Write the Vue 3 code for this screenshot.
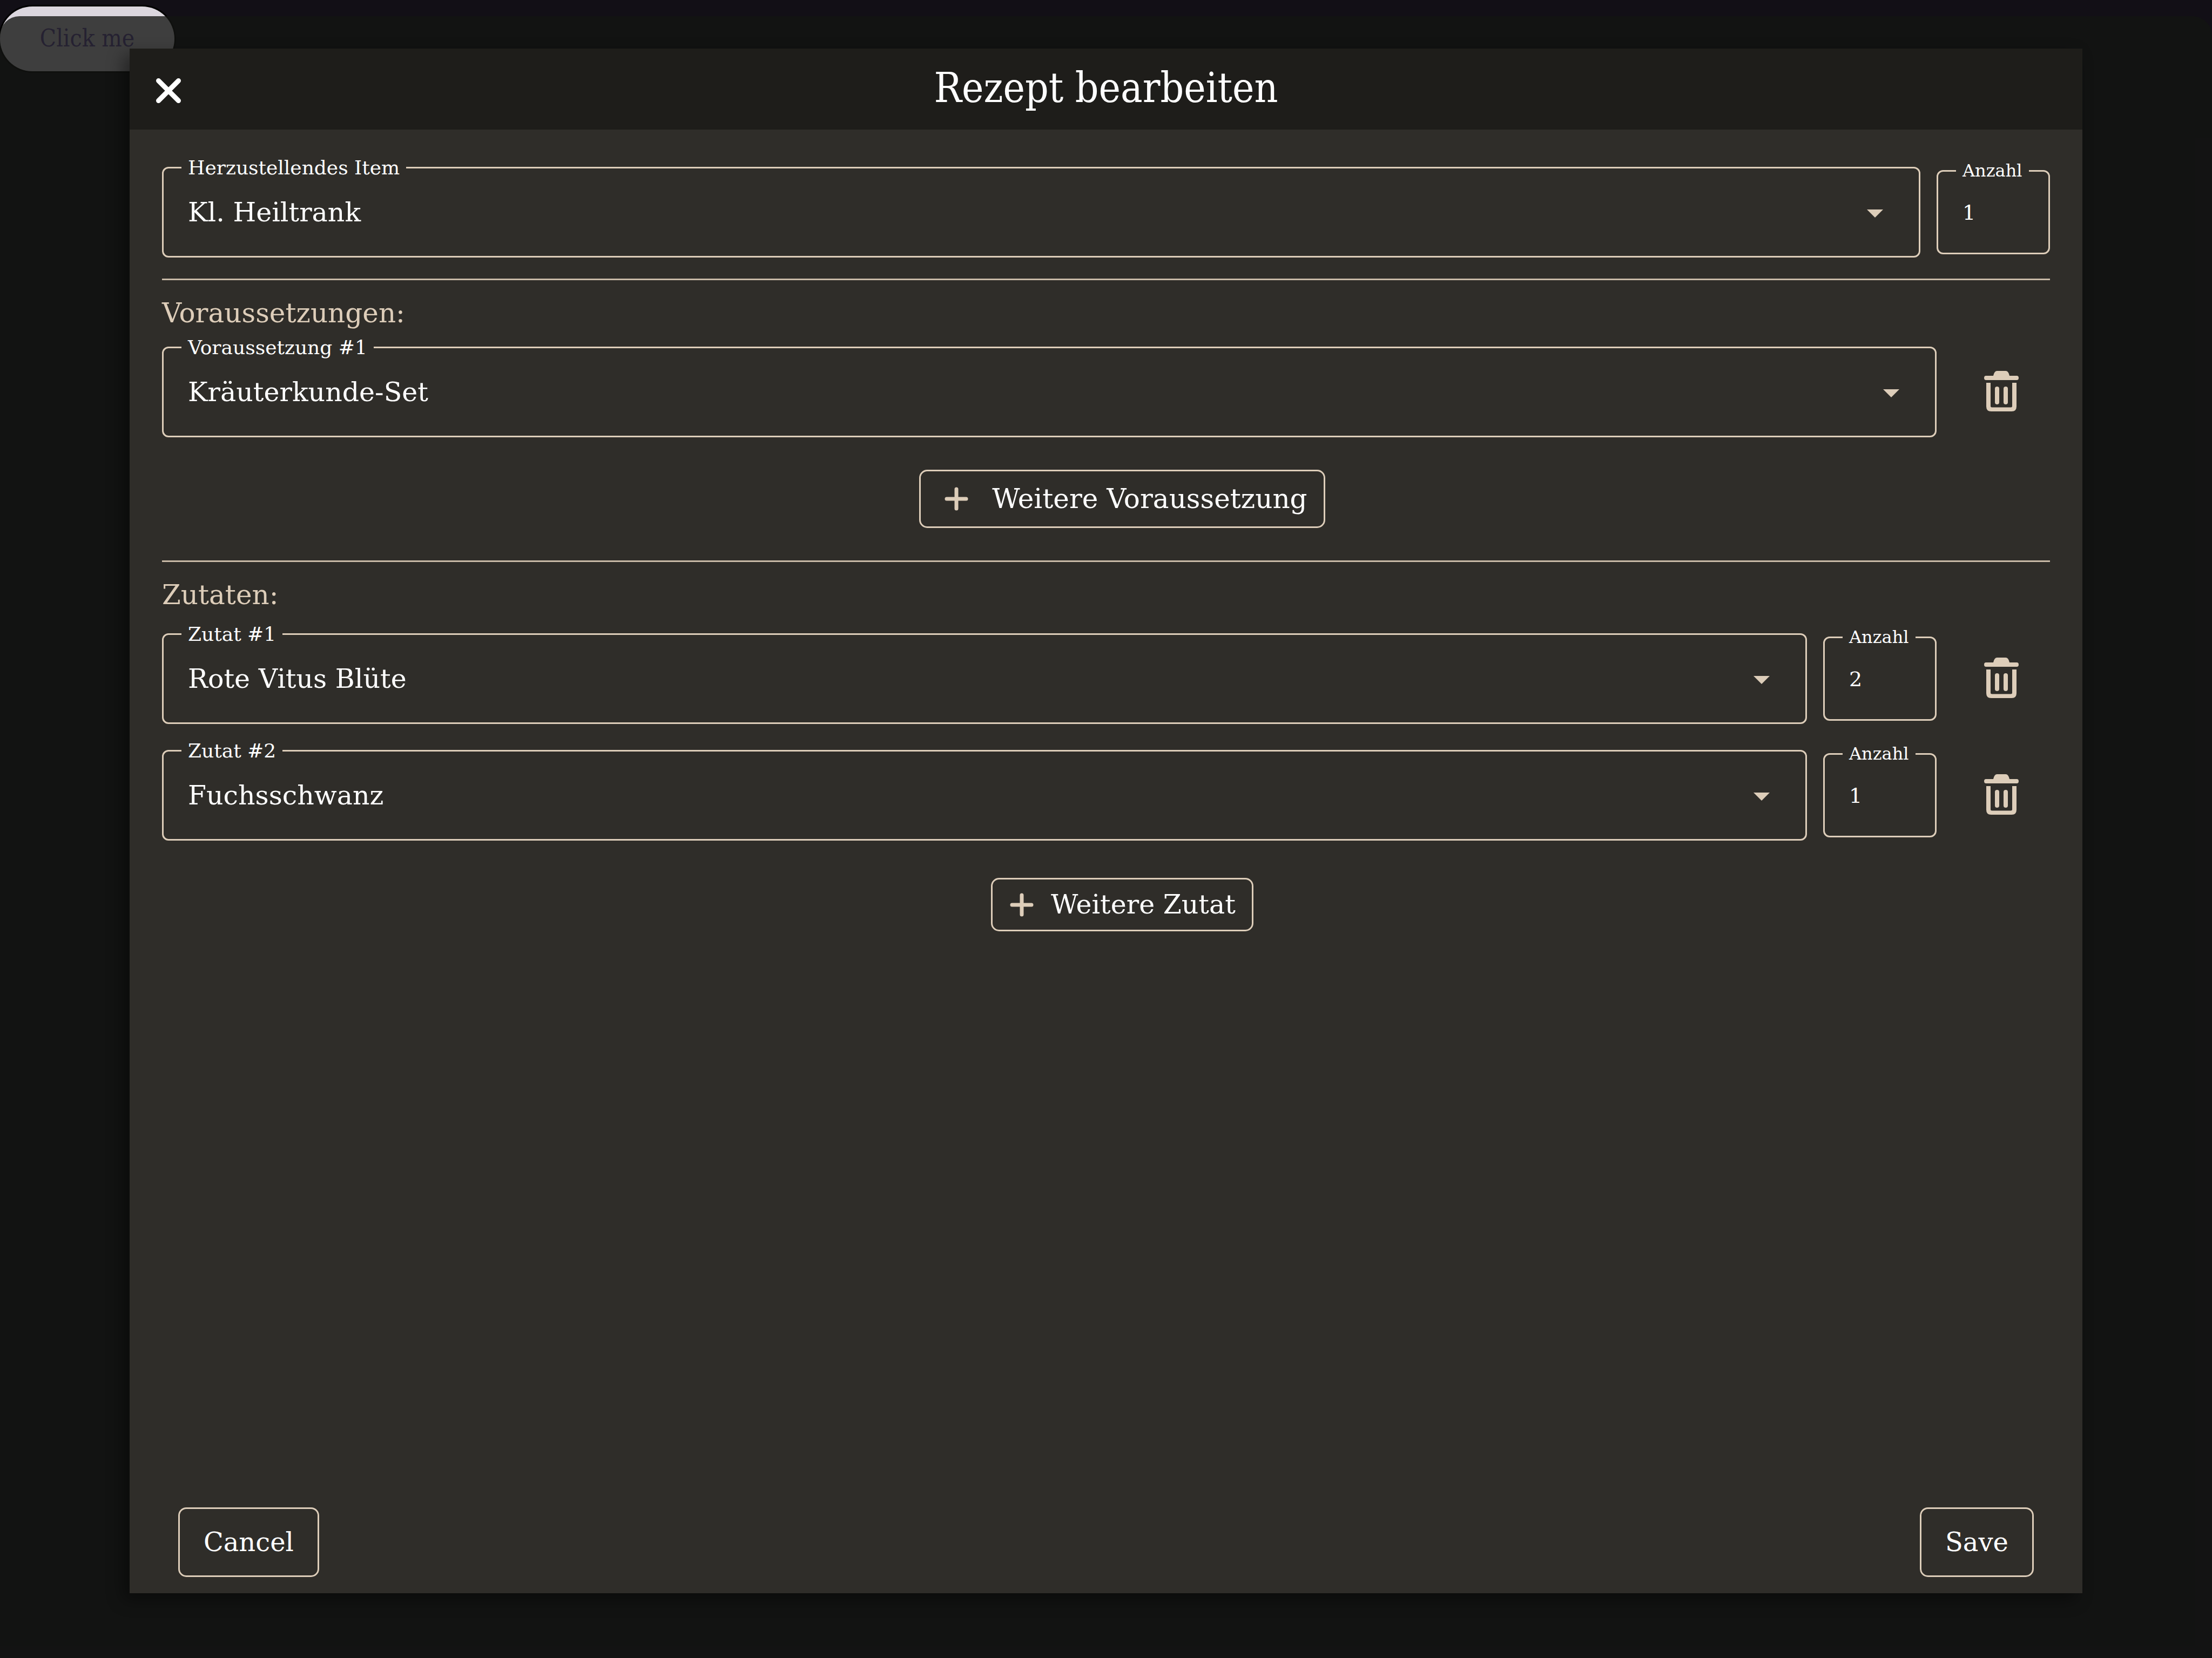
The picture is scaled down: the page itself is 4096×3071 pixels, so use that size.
<script setup>
import { ref } from 'vue'

const items = ['Kl. Heiltrank', 'Kräuterkunde-Set', 'Rote Vitus Blüte', 'Fuchsschwanz']

const product = ref('Kl. Heiltrank')
const amount = ref(1)
const requirements = ref([{ item: 'Kräuterkunde-Set' }])
const ingredients = ref([
  { item: 'Rote Vitus Blüte', amount: 2 },
  { item: 'Fuchsschwanz', amount: 1 },
])
</script>

<template>
  <div class="page">
    <button type="button" class="launch">Click me</button>

    <div class="backdrop">
      <section class="dialog" role="dialog" aria-labelledby="dialog-title">
        <header class="head">
          <button type="button" class="close" aria-label="Schließen">
            <svg viewBox="0 0 48 48" width="48" height="48" aria-hidden="true">
              <path d="M5.500 5.500L42.500 42.500M42.500 5.500L5.500 42.500" stroke="#fff" stroke-width="9" stroke-linecap="round" />
            </svg>
          </button>
          <h1 id="dialog-title" class="title">Rezept bearbeiten</h1>
        </header>

        <form class="body" @submit.prevent>
          <div class="row">
            <fieldset class="field">
              <legend><label for="product">Herzustellendes Item</label></legend>
              <div class="picker">
                <select id="product" v-model="product">
                  <option v-for="name in items" :key="name">{{ name }}</option>
                </select>
                <svg class="arrow" viewBox="0 0 24 24" aria-hidden="true"><path d="M7 10l5 5 5-5z" /></svg>
              </div>
            </fieldset>
            <fieldset class="field count">
              <legend><label for="amount">Anzahl</label></legend>
              <input id="amount" v-model="amount" type="number" min="1" />
            </fieldset>
          </div>

          <hr class="rule" />
          <h2 class="section">Voraussetzungen:</h2>
          <div class="rows requirements">
            <div v-for="(entry, i) in requirements" :key="i" class="row">
              <fieldset class="field">
                <legend><label :for="`requirement-${i}`">Voraussetzung #{{ i + 1 }}</label></legend>
                <div class="picker">
                  <select :id="`requirement-${i}`" v-model="entry.item">
                    <option v-for="name in items" :key="name">{{ name }}</option>
                  </select>
                  <svg class="arrow" viewBox="0 0 24 24" aria-hidden="true"><path d="M7 10l5 5 5-5z" /></svg>
                </div>
              </fieldset>
              <button type="button" class="trash" aria-label="Voraussetzung löschen">
                <svg viewBox="0 0 64 78" width="64" height="78" aria-hidden="true">
                  <path d="M3.500 9H17Q19 0 24 0H40Q45 0 47 9H60.500Q64 9 64 13T60.500 17H3.500Q0 17 0 13T3.500 9Z" />
                  <path d="M4 22H12V65Q12 67.500 14.500 67.500H49.500Q52 67.500 52 65V22H60V66Q60 75 51 75H13Q4 75 4 66Z" />
                  <rect x="20" y="29" width="8" height="33" rx="4" />
                  <rect x="36" y="29" width="8" height="33" rx="4" />
                </svg>
              </button>
            </div>
          </div>
          <div class="more more-requirement">
            <button type="button" class="add add-wide">
              <svg viewBox="0 0 72 72" width="72" height="72" aria-hidden="true">
                <path d="M36 18V54M18 36H54" stroke-width="7" stroke-linecap="round" />
              </svg>
              Weitere Voraussetzung
            </button>
          </div>

          <hr class="rule rule-wide" />
          <h2 class="section">Zutaten:</h2>
          <div class="rows ingredients">
            <div v-for="(entry, i) in ingredients" :key="i" class="row">
              <fieldset class="field">
                <legend><label :for="`ingredient-${i}`">Zutat #{{ i + 1 }}</label></legend>
                <div class="picker">
                  <select :id="`ingredient-${i}`" v-model="entry.item">
                    <option v-for="name in items" :key="name">{{ name }}</option>
                  </select>
                  <svg class="arrow" viewBox="0 0 24 24" aria-hidden="true"><path d="M7 10l5 5 5-5z" /></svg>
                </div>
              </fieldset>
              <fieldset class="field count">
                <legend><label :for="`ingredient-amount-${i}`">Anzahl</label></legend>
                <input :id="`ingredient-amount-${i}`" v-model="entry.amount" type="number" min="1" />
              </fieldset>
              <button type="button" class="trash" aria-label="Zutat löschen">
                <svg viewBox="0 0 64 78" width="64" height="78" aria-hidden="true">
                  <path d="M3.500 9H17Q19 0 24 0H40Q45 0 47 9H60.500Q64 9 64 13T60.500 17H3.500Q0 17 0 13T3.500 9Z" />
                  <path d="M4 22H12V65Q12 67.500 14.500 67.500H49.500Q52 67.500 52 65V22H60V66Q60 75 51 75H13Q4 75 4 66Z" />
                  <rect x="20" y="29" width="8" height="33" rx="4" />
                  <rect x="36" y="29" width="8" height="33" rx="4" />
                </svg>
              </button>
            </div>
          </div>
          <div class="more more-ingredient">
            <button type="button" class="add">
              <svg viewBox="0 0 72 72" width="72" height="72" aria-hidden="true">
                <path d="M36 18V54M18 36H54" stroke-width="7" stroke-linecap="round" />
              </svg>
              Weitere Zutat
            </button>
          </div>

          <footer class="foot">
            <button type="button" class="action">Cancel</button>
            <button type="submit" class="action">Save</button>
          </footer>
        </form>
      </section>
    </div>
  </div>
</template>

<style>
body {
  margin: 0;
  background: #120f16;
}
</style>

<style scoped>
.page {
  --sand: #ddcdb9;
  position: relative;
  display: flow-root;
  box-sizing: border-box;
  min-height: 100vh;
  background: #120f16;
  color: #fff;
  font-family: "DejaVu Serif", serif;
}

button,
select,
input {
  margin: 0;
  border: 0;
  background: none;
  color: inherit;
  font-family: inherit;
}

.launch {
  display: block;
  margin-top: 12px;
  width: 323px;
  height: 120px;
  padding: 0 36px 4px;
  border-radius: 60px;
  background: #dbd6de;
  box-shadow: 0 0 0 3px #000;
  color: #6750a4;
  font-family: "DejaVu Serif Condensed", "DejaVu Serif", serif;
  font-size: 44px;
}

.backdrop {
  position: absolute;
  inset: 30px 0 0;
  display: flex;
  box-sizing: border-box;
  padding: 60px 240px 120px;
  border-radius: 36px 36px 0 0;
  background: rgba(19, 20, 18, 0.786);
}

.dialog {
  flex: 1;
  display: flex;
  flex-direction: column;
  background: #2f2d29;
  box-shadow: -12px 12px 28px rgba(0, 0, 0, 0.4);
}

.head {
  display: grid;
  grid-template-columns: 1fr auto 1fr;
  align-items: center;
  box-sizing: border-box;
  height: 150px;
  padding: 0 48px 4px;
  background: #1e1d1a;
}

.close {
  justify-self: start;
  padding: 10px 0 0;
}

.close svg,
.add svg,
.trash svg {
  display: block;
}

.title {
  margin: 0;
  font-family: "DejaVu Serif Condensed", "DejaVu Serif", serif;
  font-size: 76px;
  font-weight: 400;
  line-height: 90px;
}

.body {
  flex: 1;
  display: flex;
  flex-direction: column;
  padding: 49px 60px 30px;
}

.rows {
  display: flex;
  flex-direction: column;
  gap: 28px;
}

.row {
  display: flex;
  align-items: center;
  gap: 30px;
}

.requirements {
  margin-top: 12px;
}

.ingredients {
  margin-top: 21px;
}

.field {
  flex: 1;
  box-sizing: border-box;
  min-width: 0;
  height: 188px;
  margin: 0;
  padding: 0 33px;
  border: 3px solid var(--sand);
  border-radius: 12px;
}

.field legend {
  padding: 0 12px;
  font-size: 36px;
  line-height: 43px;
  white-space: nowrap;
}

.field label {
  display: block;
}

.count {
  flex: 0 0 210px;
  height: 176px;
  padding-right: 21px;
}

.count legend {
  font-size: 32px;
}

.count input {
  appearance: textfield;
  display: block;
  box-sizing: border-box;
  width: 100%;
  height: 130px;
  padding: 0 0 18px 12px;
  font-size: 38px;
}

.count input::-webkit-inner-spin-button {
  appearance: none;
  margin: 0;
}

.picker {
  display: grid;
  align-items: center;
  height: 123px;
}

.picker select {
  grid-area: 1 / 1;
  appearance: none;
  width: 100%;
  height: 123px;
  padding: 0 96px 0 12px;
  font-size: 49px;
}

.picker option {
  background: #2f2d29;
}

.arrow {
  grid-area: 1 / 1;
  justify-self: end;
  width: 72px;
  height: 72px;
  margin-right: 12px;
  fill: var(--sand);
  pointer-events: none;
}

.rule {
  width: 100%;
  height: 3px;
  margin: 39px 0 0;
  border: 0;
  background: #c8b9a6;
}

.rule-wide {
  margin-top: 60px;
}

.section {
  margin: 31px 0 0;
  color: var(--sand);
  font-size: 50px;
  font-weight: 400;
  line-height: 60px;
}

.trash {
  align-self: flex-end;
  display: grid;
  place-items: center;
  width: 180px;
  height: 168px;
  padding: 0;
}

.trash svg {
  fill: var(--sand);
}

.more {
  display: flex;
  justify-content: center;
  padding-left: 60px;
}

.more-requirement {
  margin-top: 60px;
}

.more-ingredient {
  margin-top: 69px;
}

.add {
  display: flex;
  align-items: center;
  gap: 18px;
  height: 99px;
  padding: 0 30px 0 18px;
  border: 3px solid var(--sand);
  border-radius: 15px;
  font-size: 49px;
  white-space: nowrap;
}

.add-wide {
  gap: 30px;
  height: 108px;
  padding-left: 30px;
  font-size: 50px;
}

.add svg {
  stroke: var(--sand);
}

.foot {
  display: flex;
  justify-content: space-between;
  margin-top: auto;
  padding: 0 30px;
}

.action {
  height: 129px;
  padding: 0 44px 2px;
  border: 3px solid var(--sand);
  border-radius: 15px;
  font-size: 48px;
}
</style>
